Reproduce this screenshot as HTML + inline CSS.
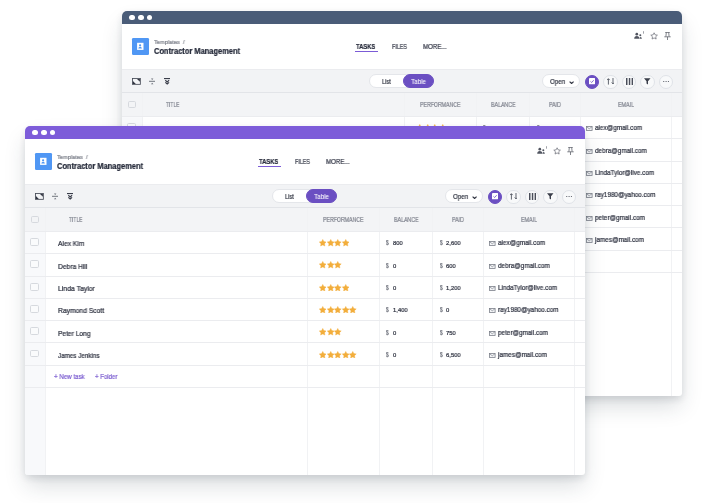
<!DOCTYPE html>
<html><head><meta charset="utf-8"><style>
*{margin:0;padding:0;box-sizing:border-box}
html,body{width:706px;height:503px;background:#fff;overflow:hidden;font-family:"Liberation Sans", sans-serif}
.win{position:absolute;background:#fff;border-radius:5px 5px 3px 3px;overflow:hidden;box-shadow:0 3px 7px rgba(30,45,60,0.12),0 12px 22px -2px rgba(30,45,60,0.17)}
.win div,.win svg{position:absolute}
.t{white-space:nowrap;transform-origin:0 0;will-change:transform;-webkit-text-stroke:0.22px currentColor}
.bar{left:0;top:0;width:560px;height:12.8px}
.dot{top:3.85px;width:5.3px;height:5.3px;border-radius:50%;background:#fff}
.appicon{left:9.5px;top:27.2px;width:17.3px;height:17px;border-radius:1.3px;background:#5097f4}
.appicon svg{left:0;top:0}
.uline{left:232.8px;top:39.9px;width:23px;height:1.1px;background:#7b5bd6}
.tbar{left:0;top:58px;width:560px;height:23.7px;background:#f2f3f5;border-top:0.6px solid #ebecef;border-bottom:0.8px solid #e2e4e8}
.pill{top:63.4px;height:14.1px;border-radius:7.05px;background:#fff;border:0.6px solid #e4e6ea}
.pill.purple{background:#6b4fc2;border-color:#6b4fc2}
.circ{top:63.5px;width:14.1px;height:14.1px;border-radius:50%;background:#f8f9fa;border:0.7px solid #e0e3e8}
.circ.purple{background:#6b4fc2;border-color:#6b4fc2}
.thead{left:0;top:81.7px;width:560px;background:#f3f4f6}
.lcol{left:0;width:20px;background:#f8f9fb}
.vline{width:1px;background:#f1f2f4}
.hline{left:0;width:560px;height:1px;background:#ebecef}
.cb{width:8.4px;height:7.9px;border:0.75px solid #d6d9de;border-radius:1.6px;background:#fafbfc}
.stars{width:40px;height:7px}
.star{position:absolute;top:-0.5px;width:7.5px;height:7.5px}
</style></head>
<body>
<div class="win" style="left:122px;top:11px;width:560px;height:384.8px">
<div class="bar" style="background:#4a5c78"></div>
<div class="dot" style="left:7.35px"></div>
<div class="dot" style="left:16.25px"></div>
<div class="dot" style="left:24.75px"></div>
<div class="appicon"><svg viewBox="0 0 17.3 17" width="17.3" height="17"><rect x="5.1" y="4.8" width="6.4" height="7.1" fill="#fff"/><circle cx="8.1" cy="7.3" r="1.1" fill="#5097f4"/><path d="M6.3 10.4 Q6.5 8.7 8.1 8.7 Q9.7 8.7 9.9 10.4 Z" fill="#5097f4"/></svg></div>
<div class="t " style="left:31.90px;top:28px;font-size:6.20px;line-height:6.20px;color:#80848e;transform:scaleX(0.916);">Templates&nbsp;&nbsp;/</div>
<div class="t " style="left:31.90px;top:36px;font-size:8.50px;line-height:8.50px;color:#232838;font-weight:bold;transform:scaleX(0.880);">Contractor&nbsp;Management</div>
<div class="t " style="left:234.20px;top:32px;font-size:7.00px;line-height:7.00px;color:#262a3a;font-weight:bold;transform:scaleX(0.832);">TASKS</div>
<div class="uline"></div>
<div class="t " style="left:269.70px;top:32px;font-size:7.00px;line-height:7.00px;color:#333746;transform:scaleX(0.766);">FILES</div>
<div class="t " style="left:300.80px;top:32px;font-size:7.00px;line-height:7.00px;color:#333746;transform:scaleX(0.876);">MORE...</div>
<svg class="ricon" style="left:511.8px;top:20.2px" width="10.5" height="8" viewBox="0 0 10.5 8"><circle cx="2.8" cy="3.2" r="1.35" fill="#50545f"/><path d="M0.2 7.7 Q0.3 5.0 2.8 5.0 Q5.3 5.0 5.4 7.7Z" fill="#50545f"/><circle cx="6.3" cy="4.3" r="1.0" fill="#50545f"/><path d="M5.5 7.7 Q5.6 5.9 6.5 5.9 Q7.8 5.9 7.9 7.7Z" fill="#50545f"/><path d="M9.6 0.2v2.5" stroke="#6a6e78" stroke-width="0.7"/></svg>
<svg class="ricon" style="left:528.4px;top:21.0px" width="8.2" height="7.9" viewBox="0 0 24 23"><path d="M12 2.2l2.9 6.1 6.8.9-5 4.7 1.3 6.7-6-3.3-6 3.3 1.3-6.7-5-4.7 6.8-.9z" fill="none" stroke="#585c66" stroke-width="1.9" stroke-linejoin="round"/></svg>
<svg class="ricon" style="left:542.4px;top:21.0px" width="7" height="8" viewBox="0 0 7 8"><path d="M1.2 0.45h4.6M2.3 0.45L1.9 4.6M4.7 0.45L5.1 4.6M0.3 4.8h6.4M3.5 4.8v3.2" stroke="#585c66" stroke-width="0.75" fill="none"/></svg>
<div class="tbar"></div>
<svg class="ticon" style="left:10px;top:67px" width="8.8" height="6.8" viewBox="0 0 8.8 6.8"><rect x="0.45" y="0.45" width="7.9" height="5.9" fill="none" stroke="#464a56" stroke-width="0.85"/><path d="M5.0 0.9H7.9V3.8Z" fill="#2e323e"/><path d="M0.9 3.0V5.9H3.8Z" fill="#2e323e"/></svg>
<svg class="ticon" style="left:26.6px;top:67px" width="6.4" height="6.6" viewBox="0 0 6.4 6.6"><path d="M0 3.3h6.4" stroke="#5a5e68" stroke-width="0.85"/><path d="M2.0 0.4H4.4L3.2 1.9Z" fill="#6a6e78"/><path d="M2.0 6.2H4.4L3.2 4.7Z" fill="#6a6e78"/></svg>
<svg class="ticon" style="left:41.5px;top:67px" width="6.4" height="7" viewBox="0 0 6.4 7"><rect x="0" y="0" width="6.4" height="1.1" fill="#3a3e4a"/><path d="M1.3 2.3L3.2 3.9 5.1 2.3M1.3 4.4L3.2 6.0 5.1 4.4" stroke="#3a3e4a" stroke-width="1.15" fill="none"/></svg>
<div class="pill" style="left:247px;width:65px"></div>
<div class="pill purple" style="left:280.9px;width:31.3px"></div>
<div class="t " style="left:259.70px;top:67px;font-size:7.00px;line-height:7.00px;color:#333744;transform:scaleX(0.799);">List</div>
<div class="t " style="left:289.10px;top:67px;font-size:7.00px;line-height:7.00px;color:#ffffff;transform:scaleX(0.896);-webkit-text-stroke:0.05px #fff;">Table</div>
<div class="pill" style="left:420.3px;width:37.3px"></div>
<div class="t " style="left:427.90px;top:67px;font-size:7.00px;line-height:7.00px;color:#333744;transform:scaleX(0.888);">Open</div>
<svg class="ticon" style="left:447px;top:69.8px" width="5.2" height="3" viewBox="0 0 5.2 3"><path d="M0.6 0.6l2 1.9 2-1.9" stroke="#333744" stroke-width="1.2" fill="none"/></svg>
<div class="circ purple" style="left:462.65px"></div>
<div class="circ" style="left:481.45px"></div>
<div class="circ" style="left:500.05px"></div>
<div class="circ" style="left:518.45px"></div>
<div class="circ" style="left:536.85px"></div>
<svg class="ticon" style="left:466.8px;top:67.4px" width="6.2" height="6.3" viewBox="0 0 6.2 6.3"><rect x="0" y="0" width="6.2" height="6.3" rx="0.9" fill="#fff"/><path d="M1.5 3.4L2.7 4.5 4.7 2.2" stroke="#6b4fc2" stroke-width="0.8" fill="none"/></svg>
<svg class="ticon" style="left:485px;top:67px" width="7.4" height="6.6" viewBox="0 0 7.4 6.6"><path d="M1.4 6.6V0.8M0.1 2.1L1.4 0.7 2.7 2.1M6 0v5.8M4.7 4.5L6 5.9 7.3 4.5" stroke="#474b57" stroke-width="0.85" fill="none"/></svg>
<svg class="ticon" style="left:503.8px;top:66.6px" width="7.1" height="7" viewBox="0 0 7.1 7"><path d="M0.75 0v7M3.55 0v7M6.35 0v7" stroke="#4a4e5a" stroke-width="1.45"/></svg>
<svg class="ticon" style="left:522.3px;top:67px" width="6.5" height="6.5" viewBox="0 0 6.5 6.5"><path d="M0 0.2H6.5L4 3.2V6.5L2.5 5.6V3.2Z" fill="#3a3e4a"/></svg>
<svg class="ticon" style="left:540.8px;top:70.1px" width="6.2" height="1.4" viewBox="0 0 6.2 1.4"><circle cx="0.7" cy="0.7" r="0.65" fill="#5a5e68"/><circle cx="3.1" cy="0.7" r="0.65" fill="#5a5e68"/><circle cx="5.5" cy="0.7" r="0.65" fill="#5a5e68"/></svg>
<div class="thead" style="height:23.75px"></div>
<div class="lcol" style="top:105.45px;height:279.35px"></div>
<div class="vline" style="left:20px;top:82px;height:302.8px"></div>
<div class="vline" style="left:282px;top:82px;height:302.8px"></div>
<div class="vline" style="left:354px;top:82px;height:302.8px"></div>
<div class="vline" style="left:407px;top:82px;height:302.8px"></div>
<div class="vline" style="left:458px;top:82px;height:302.8px"></div>
<div class="vline" style="left:549px;top:82px;height:302.8px"></div>
<div class="cb" style="left:5.6px;top:89.6px;background:transparent"></div>
<div class="t " style="left:44.30px;top:91px;font-size:6.30px;line-height:6.30px;color:#80848f;transform:scaleX(0.781);">TITLE</div>
<div class="t " style="left:298.45px;top:91px;font-size:6.30px;line-height:6.30px;color:#80848f;transform:scaleX(0.827);">PERFORMANCE</div>
<div class="t " style="left:368.90px;top:91px;font-size:6.30px;line-height:6.30px;color:#80848f;transform:scaleX(0.836);">BALANCE</div>
<div class="t " style="left:427.30px;top:91px;font-size:6.30px;line-height:6.30px;color:#80848f;transform:scaleX(0.829);">PAID</div>
<div class="t " style="left:496.20px;top:91px;font-size:6.30px;line-height:6.30px;color:#80848f;transform:scaleX(0.846);">EMAIL</div>
<div class="hline" style="top:105px"></div>
<div class="hline" style="top:127px"></div>
<div class="hline" style="top:150px"></div>
<div class="hline" style="top:172px"></div>
<div class="hline" style="top:194px"></div>
<div class="hline" style="top:216px"></div>
<div class="hline" style="top:239px"></div>
<div class="hline" style="top:261px"></div>
<div class="cb" style="left:5.4px;top:112.05px"></div>
<div class="t " style="left:33.10px;top:115px;font-size:6.90px;line-height:6.90px;color:#2e3240;transform:scaleX(0.970);">Alex&nbsp;Kim</div>
<div class="stars" style="left:293.9px;top:113.55px"><svg class="star" style="left:0.00px" viewBox="0 0 24 24"><path d="M12.00 1.20 L15.47 8.23 L23.22 9.35 L17.61 14.82 L18.94 22.55 L12.00 18.90 L5.06 22.55 L6.39 14.82 L0.78 9.35 L8.53 8.23Z" fill="#f3ae3c" stroke="#f3ae3c" stroke-width="1.2" stroke-linejoin="round"/></svg><svg class="star" style="left:7.65px" viewBox="0 0 24 24"><path d="M12.00 1.20 L15.47 8.23 L23.22 9.35 L17.61 14.82 L18.94 22.55 L12.00 18.90 L5.06 22.55 L6.39 14.82 L0.78 9.35 L8.53 8.23Z" fill="#f3ae3c" stroke="#f3ae3c" stroke-width="1.2" stroke-linejoin="round"/></svg><svg class="star" style="left:15.30px" viewBox="0 0 24 24"><path d="M12.00 1.20 L15.47 8.23 L23.22 9.35 L17.61 14.82 L18.94 22.55 L12.00 18.90 L5.06 22.55 L6.39 14.82 L0.78 9.35 L8.53 8.23Z" fill="#f3ae3c" stroke="#f3ae3c" stroke-width="1.2" stroke-linejoin="round"/></svg><svg class="star" style="left:22.95px" viewBox="0 0 24 24"><path d="M12.00 1.20 L15.47 8.23 L23.22 9.35 L17.61 14.82 L18.94 22.55 L12.00 18.90 L5.06 22.55 L6.39 14.82 L0.78 9.35 L8.53 8.23Z" fill="#f3ae3c" stroke="#f3ae3c" stroke-width="1.2" stroke-linejoin="round"/></svg></div>
<div class="t " style="left:360.90px;top:114px;font-size:6.60px;line-height:6.60px;color:#6a6e78;transform:scaleX(0.709);">$</div>
<div class="t " style="left:367.60px;top:115px;font-size:5.90px;line-height:5.90px;color:#2e3240;transform:scaleX(0.979);">800</div>
<div class="t " style="left:414.70px;top:114px;font-size:6.60px;line-height:6.60px;color:#6a6e78;transform:scaleX(0.709);">$</div>
<div class="t " style="left:420.70px;top:115px;font-size:5.90px;line-height:5.90px;color:#2e3240;transform:scaleX(0.979);">2,600</div>
<svg class="mail" style="left:464px;top:115px" width="6.5" height="4.8" viewBox="0 0 6.5 4.8"><rect x="0.4" y="0.4" width="5.7" height="4.0" fill="#f4f5f7" stroke="#7c808a" stroke-width="0.8"/><path d="M0.6 0.8l2.65 2 2.65-2" stroke="#7c808a" stroke-width="0.65" fill="none"/></svg>
<div class="t " style="left:473.20px;top:114px;font-size:6.90px;line-height:6.90px;color:#2e3240;transform:scaleX(0.924);">alex@gmail.com</div>
<div class="cb" style="left:5.4px;top:134.35px"></div>
<div class="t " style="left:33.10px;top:138px;font-size:6.90px;line-height:6.90px;color:#2e3240;transform:scaleX(0.971);">Debra&nbsp;Hill</div>
<div class="stars" style="left:293.9px;top:135.85px"><svg class="star" style="left:0.00px" viewBox="0 0 24 24"><path d="M12.00 1.20 L15.47 8.23 L23.22 9.35 L17.61 14.82 L18.94 22.55 L12.00 18.90 L5.06 22.55 L6.39 14.82 L0.78 9.35 L8.53 8.23Z" fill="#f3ae3c" stroke="#f3ae3c" stroke-width="1.2" stroke-linejoin="round"/></svg><svg class="star" style="left:7.65px" viewBox="0 0 24 24"><path d="M12.00 1.20 L15.47 8.23 L23.22 9.35 L17.61 14.82 L18.94 22.55 L12.00 18.90 L5.06 22.55 L6.39 14.82 L0.78 9.35 L8.53 8.23Z" fill="#f3ae3c" stroke="#f3ae3c" stroke-width="1.2" stroke-linejoin="round"/></svg><svg class="star" style="left:15.30px" viewBox="0 0 24 24"><path d="M12.00 1.20 L15.47 8.23 L23.22 9.35 L17.61 14.82 L18.94 22.55 L12.00 18.90 L5.06 22.55 L6.39 14.82 L0.78 9.35 L8.53 8.23Z" fill="#f3ae3c" stroke="#f3ae3c" stroke-width="1.2" stroke-linejoin="round"/></svg></div>
<div class="t " style="left:360.90px;top:137px;font-size:6.60px;line-height:6.60px;color:#6a6e78;transform:scaleX(0.709);">$</div>
<div class="t " style="left:367.60px;top:138px;font-size:5.90px;line-height:5.90px;color:#2e3240;transform:scaleX(0.979);">0</div>
<div class="t " style="left:414.70px;top:137px;font-size:6.60px;line-height:6.60px;color:#6a6e78;transform:scaleX(0.709);">$</div>
<div class="t " style="left:420.70px;top:138px;font-size:5.90px;line-height:5.90px;color:#2e3240;transform:scaleX(0.979);">600</div>
<svg class="mail" style="left:464px;top:138px" width="6.5" height="4.8" viewBox="0 0 6.5 4.8"><rect x="0.4" y="0.4" width="5.7" height="4.0" fill="#f4f5f7" stroke="#7c808a" stroke-width="0.8"/><path d="M0.6 0.8l2.65 2 2.65-2" stroke="#7c808a" stroke-width="0.65" fill="none"/></svg>
<div class="t " style="left:473.20px;top:137px;font-size:6.90px;line-height:6.90px;color:#2e3240;transform:scaleX(0.924);">debra@gmail.com</div>
<div class="cb" style="left:5.4px;top:156.65px"></div>
<div class="t " style="left:33.10px;top:160px;font-size:6.90px;line-height:6.90px;color:#2e3240;transform:scaleX(0.990);">Linda&nbsp;Taylor</div>
<div class="stars" style="left:293.9px;top:158.15px"><svg class="star" style="left:0.00px" viewBox="0 0 24 24"><path d="M12.00 1.20 L15.47 8.23 L23.22 9.35 L17.61 14.82 L18.94 22.55 L12.00 18.90 L5.06 22.55 L6.39 14.82 L0.78 9.35 L8.53 8.23Z" fill="#f3ae3c" stroke="#f3ae3c" stroke-width="1.2" stroke-linejoin="round"/></svg><svg class="star" style="left:7.65px" viewBox="0 0 24 24"><path d="M12.00 1.20 L15.47 8.23 L23.22 9.35 L17.61 14.82 L18.94 22.55 L12.00 18.90 L5.06 22.55 L6.39 14.82 L0.78 9.35 L8.53 8.23Z" fill="#f3ae3c" stroke="#f3ae3c" stroke-width="1.2" stroke-linejoin="round"/></svg><svg class="star" style="left:15.30px" viewBox="0 0 24 24"><path d="M12.00 1.20 L15.47 8.23 L23.22 9.35 L17.61 14.82 L18.94 22.55 L12.00 18.90 L5.06 22.55 L6.39 14.82 L0.78 9.35 L8.53 8.23Z" fill="#f3ae3c" stroke="#f3ae3c" stroke-width="1.2" stroke-linejoin="round"/></svg><svg class="star" style="left:22.95px" viewBox="0 0 24 24"><path d="M12.00 1.20 L15.47 8.23 L23.22 9.35 L17.61 14.82 L18.94 22.55 L12.00 18.90 L5.06 22.55 L6.39 14.82 L0.78 9.35 L8.53 8.23Z" fill="#f3ae3c" stroke="#f3ae3c" stroke-width="1.2" stroke-linejoin="round"/></svg></div>
<div class="t " style="left:360.90px;top:159px;font-size:6.60px;line-height:6.60px;color:#6a6e78;transform:scaleX(0.709);">$</div>
<div class="t " style="left:367.60px;top:160px;font-size:5.90px;line-height:5.90px;color:#2e3240;transform:scaleX(0.979);">0</div>
<div class="t " style="left:414.70px;top:159px;font-size:6.60px;line-height:6.60px;color:#6a6e78;transform:scaleX(0.709);">$</div>
<div class="t " style="left:420.70px;top:160px;font-size:5.90px;line-height:5.90px;color:#2e3240;transform:scaleX(0.979);">1,200</div>
<svg class="mail" style="left:464px;top:160px" width="6.5" height="4.8" viewBox="0 0 6.5 4.8"><rect x="0.4" y="0.4" width="5.7" height="4.0" fill="#f4f5f7" stroke="#7c808a" stroke-width="0.8"/><path d="M0.6 0.8l2.65 2 2.65-2" stroke="#7c808a" stroke-width="0.65" fill="none"/></svg>
<div class="t " style="left:473.20px;top:159px;font-size:6.90px;line-height:6.90px;color:#2e3240;transform:scaleX(0.924);">LindaTylor@live.com</div>
<div class="cb" style="left:5.4px;top:178.95px"></div>
<div class="t " style="left:33.10px;top:182px;font-size:6.90px;line-height:6.90px;color:#2e3240;transform:scaleX(0.979);">Raymond&nbsp;Scott</div>
<div class="stars" style="left:293.9px;top:180.45px"><svg class="star" style="left:0.00px" viewBox="0 0 24 24"><path d="M12.00 1.20 L15.47 8.23 L23.22 9.35 L17.61 14.82 L18.94 22.55 L12.00 18.90 L5.06 22.55 L6.39 14.82 L0.78 9.35 L8.53 8.23Z" fill="#f3ae3c" stroke="#f3ae3c" stroke-width="1.2" stroke-linejoin="round"/></svg><svg class="star" style="left:7.65px" viewBox="0 0 24 24"><path d="M12.00 1.20 L15.47 8.23 L23.22 9.35 L17.61 14.82 L18.94 22.55 L12.00 18.90 L5.06 22.55 L6.39 14.82 L0.78 9.35 L8.53 8.23Z" fill="#f3ae3c" stroke="#f3ae3c" stroke-width="1.2" stroke-linejoin="round"/></svg><svg class="star" style="left:15.30px" viewBox="0 0 24 24"><path d="M12.00 1.20 L15.47 8.23 L23.22 9.35 L17.61 14.82 L18.94 22.55 L12.00 18.90 L5.06 22.55 L6.39 14.82 L0.78 9.35 L8.53 8.23Z" fill="#f3ae3c" stroke="#f3ae3c" stroke-width="1.2" stroke-linejoin="round"/></svg><svg class="star" style="left:22.95px" viewBox="0 0 24 24"><path d="M12.00 1.20 L15.47 8.23 L23.22 9.35 L17.61 14.82 L18.94 22.55 L12.00 18.90 L5.06 22.55 L6.39 14.82 L0.78 9.35 L8.53 8.23Z" fill="#f3ae3c" stroke="#f3ae3c" stroke-width="1.2" stroke-linejoin="round"/></svg><svg class="star" style="left:30.60px" viewBox="0 0 24 24"><path d="M12.00 1.20 L15.47 8.23 L23.22 9.35 L17.61 14.82 L18.94 22.55 L12.00 18.90 L5.06 22.55 L6.39 14.82 L0.78 9.35 L8.53 8.23Z" fill="#f3ae3c" stroke="#f3ae3c" stroke-width="1.2" stroke-linejoin="round"/></svg></div>
<div class="t " style="left:360.90px;top:181px;font-size:6.60px;line-height:6.60px;color:#6a6e78;transform:scaleX(0.709);">$</div>
<div class="t " style="left:367.60px;top:182px;font-size:5.90px;line-height:5.90px;color:#2e3240;transform:scaleX(0.979);">1,400</div>
<div class="t " style="left:414.70px;top:181px;font-size:6.60px;line-height:6.60px;color:#6a6e78;transform:scaleX(0.709);">$</div>
<div class="t " style="left:420.70px;top:182px;font-size:5.90px;line-height:5.90px;color:#2e3240;transform:scaleX(0.979);">0</div>
<svg class="mail" style="left:464px;top:182px" width="6.5" height="4.8" viewBox="0 0 6.5 4.8"><rect x="0.4" y="0.4" width="5.7" height="4.0" fill="#f4f5f7" stroke="#7c808a" stroke-width="0.8"/><path d="M0.6 0.8l2.65 2 2.65-2" stroke="#7c808a" stroke-width="0.65" fill="none"/></svg>
<div class="t " style="left:473.20px;top:181px;font-size:6.90px;line-height:6.90px;color:#2e3240;transform:scaleX(0.924);">ray1980@yahoo.com</div>
<div class="cb" style="left:5.4px;top:201.25px"></div>
<div class="t " style="left:33.10px;top:205px;font-size:6.90px;line-height:6.90px;color:#2e3240;transform:scaleX(0.960);">Peter&nbsp;Long</div>
<div class="stars" style="left:293.9px;top:202.75px"><svg class="star" style="left:0.00px" viewBox="0 0 24 24"><path d="M12.00 1.20 L15.47 8.23 L23.22 9.35 L17.61 14.82 L18.94 22.55 L12.00 18.90 L5.06 22.55 L6.39 14.82 L0.78 9.35 L8.53 8.23Z" fill="#f3ae3c" stroke="#f3ae3c" stroke-width="1.2" stroke-linejoin="round"/></svg><svg class="star" style="left:7.65px" viewBox="0 0 24 24"><path d="M12.00 1.20 L15.47 8.23 L23.22 9.35 L17.61 14.82 L18.94 22.55 L12.00 18.90 L5.06 22.55 L6.39 14.82 L0.78 9.35 L8.53 8.23Z" fill="#f3ae3c" stroke="#f3ae3c" stroke-width="1.2" stroke-linejoin="round"/></svg><svg class="star" style="left:15.30px" viewBox="0 0 24 24"><path d="M12.00 1.20 L15.47 8.23 L23.22 9.35 L17.61 14.82 L18.94 22.55 L12.00 18.90 L5.06 22.55 L6.39 14.82 L0.78 9.35 L8.53 8.23Z" fill="#f3ae3c" stroke="#f3ae3c" stroke-width="1.2" stroke-linejoin="round"/></svg></div>
<div class="t " style="left:360.90px;top:204px;font-size:6.60px;line-height:6.60px;color:#6a6e78;transform:scaleX(0.709);">$</div>
<div class="t " style="left:367.60px;top:205px;font-size:5.90px;line-height:5.90px;color:#2e3240;transform:scaleX(0.979);">0</div>
<div class="t " style="left:414.70px;top:204px;font-size:6.60px;line-height:6.60px;color:#6a6e78;transform:scaleX(0.709);">$</div>
<div class="t " style="left:420.70px;top:205px;font-size:5.90px;line-height:5.90px;color:#2e3240;transform:scaleX(0.979);">750</div>
<svg class="mail" style="left:464px;top:205px" width="6.5" height="4.8" viewBox="0 0 6.5 4.8"><rect x="0.4" y="0.4" width="5.7" height="4.0" fill="#f4f5f7" stroke="#7c808a" stroke-width="0.8"/><path d="M0.6 0.8l2.65 2 2.65-2" stroke="#7c808a" stroke-width="0.65" fill="none"/></svg>
<div class="t " style="left:473.20px;top:204px;font-size:6.90px;line-height:6.90px;color:#2e3240;transform:scaleX(0.924);">peter@gmail.com</div>
<div class="cb" style="left:5.4px;top:223.55px"></div>
<div class="t " style="left:33.10px;top:227px;font-size:6.90px;line-height:6.90px;color:#2e3240;transform:scaleX(0.909);">James&nbsp;Jenkins</div>
<div class="stars" style="left:293.9px;top:225.05px"><svg class="star" style="left:0.00px" viewBox="0 0 24 24"><path d="M12.00 1.20 L15.47 8.23 L23.22 9.35 L17.61 14.82 L18.94 22.55 L12.00 18.90 L5.06 22.55 L6.39 14.82 L0.78 9.35 L8.53 8.23Z" fill="#f3ae3c" stroke="#f3ae3c" stroke-width="1.2" stroke-linejoin="round"/></svg><svg class="star" style="left:7.65px" viewBox="0 0 24 24"><path d="M12.00 1.20 L15.47 8.23 L23.22 9.35 L17.61 14.82 L18.94 22.55 L12.00 18.90 L5.06 22.55 L6.39 14.82 L0.78 9.35 L8.53 8.23Z" fill="#f3ae3c" stroke="#f3ae3c" stroke-width="1.2" stroke-linejoin="round"/></svg><svg class="star" style="left:15.30px" viewBox="0 0 24 24"><path d="M12.00 1.20 L15.47 8.23 L23.22 9.35 L17.61 14.82 L18.94 22.55 L12.00 18.90 L5.06 22.55 L6.39 14.82 L0.78 9.35 L8.53 8.23Z" fill="#f3ae3c" stroke="#f3ae3c" stroke-width="1.2" stroke-linejoin="round"/></svg><svg class="star" style="left:22.95px" viewBox="0 0 24 24"><path d="M12.00 1.20 L15.47 8.23 L23.22 9.35 L17.61 14.82 L18.94 22.55 L12.00 18.90 L5.06 22.55 L6.39 14.82 L0.78 9.35 L8.53 8.23Z" fill="#f3ae3c" stroke="#f3ae3c" stroke-width="1.2" stroke-linejoin="round"/></svg><svg class="star" style="left:30.60px" viewBox="0 0 24 24"><path d="M12.00 1.20 L15.47 8.23 L23.22 9.35 L17.61 14.82 L18.94 22.55 L12.00 18.90 L5.06 22.55 L6.39 14.82 L0.78 9.35 L8.53 8.23Z" fill="#f3ae3c" stroke="#f3ae3c" stroke-width="1.2" stroke-linejoin="round"/></svg></div>
<div class="t " style="left:360.90px;top:226px;font-size:6.60px;line-height:6.60px;color:#6a6e78;transform:scaleX(0.709);">$</div>
<div class="t " style="left:367.60px;top:227px;font-size:5.90px;line-height:5.90px;color:#2e3240;transform:scaleX(0.979);">0</div>
<div class="t " style="left:414.70px;top:226px;font-size:6.60px;line-height:6.60px;color:#6a6e78;transform:scaleX(0.709);">$</div>
<div class="t " style="left:420.70px;top:227px;font-size:5.90px;line-height:5.90px;color:#2e3240;transform:scaleX(0.979);">6,500</div>
<svg class="mail" style="left:464px;top:227px" width="6.5" height="4.8" viewBox="0 0 6.5 4.8"><rect x="0.4" y="0.4" width="5.7" height="4.0" fill="#f4f5f7" stroke="#7c808a" stroke-width="0.8"/><path d="M0.6 0.8l2.65 2 2.65-2" stroke="#7c808a" stroke-width="0.65" fill="none"/></svg>
<div class="t " style="left:473.36px;top:226px;font-size:6.90px;line-height:6.90px;color:#2e3240;transform:scaleX(0.924);">james@mail.com</div>
<div class="t " style="left:28.60px;top:248px;font-size:6.90px;line-height:6.90px;color:#7a5cd0;transform:scaleX(0.894);">+&nbsp;New&nbsp;task</div>
<div class="t " style="left:70.30px;top:248px;font-size:6.90px;line-height:6.90px;color:#7a5cd0;transform:scaleX(0.878);">+&nbsp;Folder</div>
</div>
<div class="win" style="left:25px;top:126px;width:560px;height:349px">
<div class="bar" style="background:#7d5cd9"></div>
<div class="dot" style="left:7.35px"></div>
<div class="dot" style="left:16.25px"></div>
<div class="dot" style="left:24.75px"></div>
<div class="appicon"><svg viewBox="0 0 17.3 17" width="17.3" height="17"><rect x="5.1" y="4.8" width="6.4" height="7.1" fill="#fff"/><circle cx="8.1" cy="7.3" r="1.1" fill="#5097f4"/><path d="M6.3 10.4 Q6.5 8.7 8.1 8.7 Q9.7 8.7 9.9 10.4 Z" fill="#5097f4"/></svg></div>
<div class="t " style="left:31.90px;top:28px;font-size:6.20px;line-height:6.20px;color:#80848e;transform:scaleX(0.916);">Templates&nbsp;&nbsp;/</div>
<div class="t " style="left:31.90px;top:36px;font-size:8.50px;line-height:8.50px;color:#232838;font-weight:bold;transform:scaleX(0.880);">Contractor&nbsp;Management</div>
<div class="t " style="left:234.20px;top:32px;font-size:7.00px;line-height:7.00px;color:#262a3a;font-weight:bold;transform:scaleX(0.832);">TASKS</div>
<div class="uline"></div>
<div class="t " style="left:269.70px;top:32px;font-size:7.00px;line-height:7.00px;color:#333746;transform:scaleX(0.766);">FILES</div>
<div class="t " style="left:300.80px;top:32px;font-size:7.00px;line-height:7.00px;color:#333746;transform:scaleX(0.876);">MORE...</div>
<svg class="ricon" style="left:511.8px;top:20.2px" width="10.5" height="8" viewBox="0 0 10.5 8"><circle cx="2.8" cy="3.2" r="1.35" fill="#50545f"/><path d="M0.2 7.7 Q0.3 5.0 2.8 5.0 Q5.3 5.0 5.4 7.7Z" fill="#50545f"/><circle cx="6.3" cy="4.3" r="1.0" fill="#50545f"/><path d="M5.5 7.7 Q5.6 5.9 6.5 5.9 Q7.8 5.9 7.9 7.7Z" fill="#50545f"/><path d="M9.6 0.2v2.5" stroke="#6a6e78" stroke-width="0.7"/></svg>
<svg class="ricon" style="left:528.4px;top:21.0px" width="8.2" height="7.9" viewBox="0 0 24 23"><path d="M12 2.2l2.9 6.1 6.8.9-5 4.7 1.3 6.7-6-3.3-6 3.3 1.3-6.7-5-4.7 6.8-.9z" fill="none" stroke="#585c66" stroke-width="1.9" stroke-linejoin="round"/></svg>
<svg class="ricon" style="left:542.4px;top:21.0px" width="7" height="8" viewBox="0 0 7 8"><path d="M1.2 0.45h4.6M2.3 0.45L1.9 4.6M4.7 0.45L5.1 4.6M0.3 4.8h6.4M3.5 4.8v3.2" stroke="#585c66" stroke-width="0.75" fill="none"/></svg>
<div class="tbar"></div>
<svg class="ticon" style="left:10px;top:67px" width="8.8" height="6.8" viewBox="0 0 8.8 6.8"><rect x="0.45" y="0.45" width="7.9" height="5.9" fill="none" stroke="#464a56" stroke-width="0.85"/><path d="M5.0 0.9H7.9V3.8Z" fill="#2e323e"/><path d="M0.9 3.0V5.9H3.8Z" fill="#2e323e"/></svg>
<svg class="ticon" style="left:26.6px;top:67px" width="6.4" height="6.6" viewBox="0 0 6.4 6.6"><path d="M0 3.3h6.4" stroke="#5a5e68" stroke-width="0.85"/><path d="M2.0 0.4H4.4L3.2 1.9Z" fill="#6a6e78"/><path d="M2.0 6.2H4.4L3.2 4.7Z" fill="#6a6e78"/></svg>
<svg class="ticon" style="left:41.5px;top:67px" width="6.4" height="7" viewBox="0 0 6.4 7"><rect x="0" y="0" width="6.4" height="1.1" fill="#3a3e4a"/><path d="M1.3 2.3L3.2 3.9 5.1 2.3M1.3 4.4L3.2 6.0 5.1 4.4" stroke="#3a3e4a" stroke-width="1.15" fill="none"/></svg>
<div class="pill" style="left:247px;width:65px"></div>
<div class="pill purple" style="left:280.9px;width:31.3px"></div>
<div class="t " style="left:259.70px;top:67px;font-size:7.00px;line-height:7.00px;color:#333744;transform:scaleX(0.799);">List</div>
<div class="t " style="left:289.10px;top:67px;font-size:7.00px;line-height:7.00px;color:#ffffff;transform:scaleX(0.896);-webkit-text-stroke:0.05px #fff;">Table</div>
<div class="pill" style="left:420.3px;width:37.3px"></div>
<div class="t " style="left:427.90px;top:67px;font-size:7.00px;line-height:7.00px;color:#333744;transform:scaleX(0.888);">Open</div>
<svg class="ticon" style="left:447px;top:69.8px" width="5.2" height="3" viewBox="0 0 5.2 3"><path d="M0.6 0.6l2 1.9 2-1.9" stroke="#333744" stroke-width="1.2" fill="none"/></svg>
<div class="circ purple" style="left:462.65px"></div>
<div class="circ" style="left:481.45px"></div>
<div class="circ" style="left:500.05px"></div>
<div class="circ" style="left:518.45px"></div>
<div class="circ" style="left:536.85px"></div>
<svg class="ticon" style="left:466.8px;top:67.4px" width="6.2" height="6.3" viewBox="0 0 6.2 6.3"><rect x="0" y="0" width="6.2" height="6.3" rx="0.9" fill="#fff"/><path d="M1.5 3.4L2.7 4.5 4.7 2.2" stroke="#6b4fc2" stroke-width="0.8" fill="none"/></svg>
<svg class="ticon" style="left:485px;top:67px" width="7.4" height="6.6" viewBox="0 0 7.4 6.6"><path d="M1.4 6.6V0.8M0.1 2.1L1.4 0.7 2.7 2.1M6 0v5.8M4.7 4.5L6 5.9 7.3 4.5" stroke="#474b57" stroke-width="0.85" fill="none"/></svg>
<svg class="ticon" style="left:503.8px;top:66.6px" width="7.1" height="7" viewBox="0 0 7.1 7"><path d="M0.75 0v7M3.55 0v7M6.35 0v7" stroke="#4a4e5a" stroke-width="1.45"/></svg>
<svg class="ticon" style="left:522.3px;top:67px" width="6.5" height="6.5" viewBox="0 0 6.5 6.5"><path d="M0 0.2H6.5L4 3.2V6.5L2.5 5.6V3.2Z" fill="#3a3e4a"/></svg>
<svg class="ticon" style="left:540.8px;top:70.1px" width="6.2" height="1.4" viewBox="0 0 6.2 1.4"><circle cx="0.7" cy="0.7" r="0.65" fill="#5a5e68"/><circle cx="3.1" cy="0.7" r="0.65" fill="#5a5e68"/><circle cx="5.5" cy="0.7" r="0.65" fill="#5a5e68"/></svg>
<div class="thead" style="height:23.75px"></div>
<div class="lcol" style="top:105.45px;height:243.55px"></div>
<div class="vline" style="left:20px;top:82px;height:267px"></div>
<div class="vline" style="left:282px;top:82px;height:267px"></div>
<div class="vline" style="left:354px;top:82px;height:267px"></div>
<div class="vline" style="left:407px;top:82px;height:267px"></div>
<div class="vline" style="left:458px;top:82px;height:267px"></div>
<div class="vline" style="left:549px;top:82px;height:267px"></div>
<div class="cb" style="left:5.6px;top:89.6px;background:transparent"></div>
<div class="t " style="left:44.30px;top:91px;font-size:6.30px;line-height:6.30px;color:#80848f;transform:scaleX(0.781);">TITLE</div>
<div class="t " style="left:298.45px;top:91px;font-size:6.30px;line-height:6.30px;color:#80848f;transform:scaleX(0.827);">PERFORMANCE</div>
<div class="t " style="left:368.90px;top:91px;font-size:6.30px;line-height:6.30px;color:#80848f;transform:scaleX(0.836);">BALANCE</div>
<div class="t " style="left:427.30px;top:91px;font-size:6.30px;line-height:6.30px;color:#80848f;transform:scaleX(0.829);">PAID</div>
<div class="t " style="left:496.20px;top:91px;font-size:6.30px;line-height:6.30px;color:#80848f;transform:scaleX(0.846);">EMAIL</div>
<div class="hline" style="top:105px"></div>
<div class="hline" style="top:127px"></div>
<div class="hline" style="top:150px"></div>
<div class="hline" style="top:172px"></div>
<div class="hline" style="top:194px"></div>
<div class="hline" style="top:216px"></div>
<div class="hline" style="top:239px"></div>
<div class="hline" style="top:261px"></div>
<div class="cb" style="left:5.4px;top:112.05px"></div>
<div class="t " style="left:33.10px;top:115px;font-size:6.90px;line-height:6.90px;color:#2e3240;transform:scaleX(0.970);">Alex&nbsp;Kim</div>
<div class="stars" style="left:293.9px;top:113.55px"><svg class="star" style="left:0.00px" viewBox="0 0 24 24"><path d="M12.00 1.20 L15.47 8.23 L23.22 9.35 L17.61 14.82 L18.94 22.55 L12.00 18.90 L5.06 22.55 L6.39 14.82 L0.78 9.35 L8.53 8.23Z" fill="#f3ae3c" stroke="#f3ae3c" stroke-width="1.2" stroke-linejoin="round"/></svg><svg class="star" style="left:7.65px" viewBox="0 0 24 24"><path d="M12.00 1.20 L15.47 8.23 L23.22 9.35 L17.61 14.82 L18.94 22.55 L12.00 18.90 L5.06 22.55 L6.39 14.82 L0.78 9.35 L8.53 8.23Z" fill="#f3ae3c" stroke="#f3ae3c" stroke-width="1.2" stroke-linejoin="round"/></svg><svg class="star" style="left:15.30px" viewBox="0 0 24 24"><path d="M12.00 1.20 L15.47 8.23 L23.22 9.35 L17.61 14.82 L18.94 22.55 L12.00 18.90 L5.06 22.55 L6.39 14.82 L0.78 9.35 L8.53 8.23Z" fill="#f3ae3c" stroke="#f3ae3c" stroke-width="1.2" stroke-linejoin="round"/></svg><svg class="star" style="left:22.95px" viewBox="0 0 24 24"><path d="M12.00 1.20 L15.47 8.23 L23.22 9.35 L17.61 14.82 L18.94 22.55 L12.00 18.90 L5.06 22.55 L6.39 14.82 L0.78 9.35 L8.53 8.23Z" fill="#f3ae3c" stroke="#f3ae3c" stroke-width="1.2" stroke-linejoin="round"/></svg></div>
<div class="t " style="left:360.90px;top:114px;font-size:6.60px;line-height:6.60px;color:#6a6e78;transform:scaleX(0.709);">$</div>
<div class="t " style="left:367.60px;top:115px;font-size:5.90px;line-height:5.90px;color:#2e3240;transform:scaleX(0.979);">800</div>
<div class="t " style="left:414.70px;top:114px;font-size:6.60px;line-height:6.60px;color:#6a6e78;transform:scaleX(0.709);">$</div>
<div class="t " style="left:420.70px;top:115px;font-size:5.90px;line-height:5.90px;color:#2e3240;transform:scaleX(0.979);">2,600</div>
<svg class="mail" style="left:464px;top:115px" width="6.5" height="4.8" viewBox="0 0 6.5 4.8"><rect x="0.4" y="0.4" width="5.7" height="4.0" fill="#f4f5f7" stroke="#7c808a" stroke-width="0.8"/><path d="M0.6 0.8l2.65 2 2.65-2" stroke="#7c808a" stroke-width="0.65" fill="none"/></svg>
<div class="t " style="left:473.20px;top:114px;font-size:6.90px;line-height:6.90px;color:#2e3240;transform:scaleX(0.924);">alex@gmail.com</div>
<div class="cb" style="left:5.4px;top:134.35px"></div>
<div class="t " style="left:33.10px;top:138px;font-size:6.90px;line-height:6.90px;color:#2e3240;transform:scaleX(0.971);">Debra&nbsp;Hill</div>
<div class="stars" style="left:293.9px;top:135.85px"><svg class="star" style="left:0.00px" viewBox="0 0 24 24"><path d="M12.00 1.20 L15.47 8.23 L23.22 9.35 L17.61 14.82 L18.94 22.55 L12.00 18.90 L5.06 22.55 L6.39 14.82 L0.78 9.35 L8.53 8.23Z" fill="#f3ae3c" stroke="#f3ae3c" stroke-width="1.2" stroke-linejoin="round"/></svg><svg class="star" style="left:7.65px" viewBox="0 0 24 24"><path d="M12.00 1.20 L15.47 8.23 L23.22 9.35 L17.61 14.82 L18.94 22.55 L12.00 18.90 L5.06 22.55 L6.39 14.82 L0.78 9.35 L8.53 8.23Z" fill="#f3ae3c" stroke="#f3ae3c" stroke-width="1.2" stroke-linejoin="round"/></svg><svg class="star" style="left:15.30px" viewBox="0 0 24 24"><path d="M12.00 1.20 L15.47 8.23 L23.22 9.35 L17.61 14.82 L18.94 22.55 L12.00 18.90 L5.06 22.55 L6.39 14.82 L0.78 9.35 L8.53 8.23Z" fill="#f3ae3c" stroke="#f3ae3c" stroke-width="1.2" stroke-linejoin="round"/></svg></div>
<div class="t " style="left:360.90px;top:137px;font-size:6.60px;line-height:6.60px;color:#6a6e78;transform:scaleX(0.709);">$</div>
<div class="t " style="left:367.60px;top:138px;font-size:5.90px;line-height:5.90px;color:#2e3240;transform:scaleX(0.979);">0</div>
<div class="t " style="left:414.70px;top:137px;font-size:6.60px;line-height:6.60px;color:#6a6e78;transform:scaleX(0.709);">$</div>
<div class="t " style="left:420.70px;top:138px;font-size:5.90px;line-height:5.90px;color:#2e3240;transform:scaleX(0.979);">600</div>
<svg class="mail" style="left:464px;top:138px" width="6.5" height="4.8" viewBox="0 0 6.5 4.8"><rect x="0.4" y="0.4" width="5.7" height="4.0" fill="#f4f5f7" stroke="#7c808a" stroke-width="0.8"/><path d="M0.6 0.8l2.65 2 2.65-2" stroke="#7c808a" stroke-width="0.65" fill="none"/></svg>
<div class="t " style="left:473.20px;top:137px;font-size:6.90px;line-height:6.90px;color:#2e3240;transform:scaleX(0.924);">debra@gmail.com</div>
<div class="cb" style="left:5.4px;top:156.65px"></div>
<div class="t " style="left:33.10px;top:160px;font-size:6.90px;line-height:6.90px;color:#2e3240;transform:scaleX(0.990);">Linda&nbsp;Taylor</div>
<div class="stars" style="left:293.9px;top:158.15px"><svg class="star" style="left:0.00px" viewBox="0 0 24 24"><path d="M12.00 1.20 L15.47 8.23 L23.22 9.35 L17.61 14.82 L18.94 22.55 L12.00 18.90 L5.06 22.55 L6.39 14.82 L0.78 9.35 L8.53 8.23Z" fill="#f3ae3c" stroke="#f3ae3c" stroke-width="1.2" stroke-linejoin="round"/></svg><svg class="star" style="left:7.65px" viewBox="0 0 24 24"><path d="M12.00 1.20 L15.47 8.23 L23.22 9.35 L17.61 14.82 L18.94 22.55 L12.00 18.90 L5.06 22.55 L6.39 14.82 L0.78 9.35 L8.53 8.23Z" fill="#f3ae3c" stroke="#f3ae3c" stroke-width="1.2" stroke-linejoin="round"/></svg><svg class="star" style="left:15.30px" viewBox="0 0 24 24"><path d="M12.00 1.20 L15.47 8.23 L23.22 9.35 L17.61 14.82 L18.94 22.55 L12.00 18.90 L5.06 22.55 L6.39 14.82 L0.78 9.35 L8.53 8.23Z" fill="#f3ae3c" stroke="#f3ae3c" stroke-width="1.2" stroke-linejoin="round"/></svg><svg class="star" style="left:22.95px" viewBox="0 0 24 24"><path d="M12.00 1.20 L15.47 8.23 L23.22 9.35 L17.61 14.82 L18.94 22.55 L12.00 18.90 L5.06 22.55 L6.39 14.82 L0.78 9.35 L8.53 8.23Z" fill="#f3ae3c" stroke="#f3ae3c" stroke-width="1.2" stroke-linejoin="round"/></svg></div>
<div class="t " style="left:360.90px;top:159px;font-size:6.60px;line-height:6.60px;color:#6a6e78;transform:scaleX(0.709);">$</div>
<div class="t " style="left:367.60px;top:160px;font-size:5.90px;line-height:5.90px;color:#2e3240;transform:scaleX(0.979);">0</div>
<div class="t " style="left:414.70px;top:159px;font-size:6.60px;line-height:6.60px;color:#6a6e78;transform:scaleX(0.709);">$</div>
<div class="t " style="left:420.70px;top:160px;font-size:5.90px;line-height:5.90px;color:#2e3240;transform:scaleX(0.979);">1,200</div>
<svg class="mail" style="left:464px;top:160px" width="6.5" height="4.8" viewBox="0 0 6.5 4.8"><rect x="0.4" y="0.4" width="5.7" height="4.0" fill="#f4f5f7" stroke="#7c808a" stroke-width="0.8"/><path d="M0.6 0.8l2.65 2 2.65-2" stroke="#7c808a" stroke-width="0.65" fill="none"/></svg>
<div class="t " style="left:473.20px;top:159px;font-size:6.90px;line-height:6.90px;color:#2e3240;transform:scaleX(0.924);">LindaTylor@live.com</div>
<div class="cb" style="left:5.4px;top:178.95px"></div>
<div class="t " style="left:33.10px;top:182px;font-size:6.90px;line-height:6.90px;color:#2e3240;transform:scaleX(0.979);">Raymond&nbsp;Scott</div>
<div class="stars" style="left:293.9px;top:180.45px"><svg class="star" style="left:0.00px" viewBox="0 0 24 24"><path d="M12.00 1.20 L15.47 8.23 L23.22 9.35 L17.61 14.82 L18.94 22.55 L12.00 18.90 L5.06 22.55 L6.39 14.82 L0.78 9.35 L8.53 8.23Z" fill="#f3ae3c" stroke="#f3ae3c" stroke-width="1.2" stroke-linejoin="round"/></svg><svg class="star" style="left:7.65px" viewBox="0 0 24 24"><path d="M12.00 1.20 L15.47 8.23 L23.22 9.35 L17.61 14.82 L18.94 22.55 L12.00 18.90 L5.06 22.55 L6.39 14.82 L0.78 9.35 L8.53 8.23Z" fill="#f3ae3c" stroke="#f3ae3c" stroke-width="1.2" stroke-linejoin="round"/></svg><svg class="star" style="left:15.30px" viewBox="0 0 24 24"><path d="M12.00 1.20 L15.47 8.23 L23.22 9.35 L17.61 14.82 L18.94 22.55 L12.00 18.90 L5.06 22.55 L6.39 14.82 L0.78 9.35 L8.53 8.23Z" fill="#f3ae3c" stroke="#f3ae3c" stroke-width="1.2" stroke-linejoin="round"/></svg><svg class="star" style="left:22.95px" viewBox="0 0 24 24"><path d="M12.00 1.20 L15.47 8.23 L23.22 9.35 L17.61 14.82 L18.94 22.55 L12.00 18.90 L5.06 22.55 L6.39 14.82 L0.78 9.35 L8.53 8.23Z" fill="#f3ae3c" stroke="#f3ae3c" stroke-width="1.2" stroke-linejoin="round"/></svg><svg class="star" style="left:30.60px" viewBox="0 0 24 24"><path d="M12.00 1.20 L15.47 8.23 L23.22 9.35 L17.61 14.82 L18.94 22.55 L12.00 18.90 L5.06 22.55 L6.39 14.82 L0.78 9.35 L8.53 8.23Z" fill="#f3ae3c" stroke="#f3ae3c" stroke-width="1.2" stroke-linejoin="round"/></svg></div>
<div class="t " style="left:360.90px;top:181px;font-size:6.60px;line-height:6.60px;color:#6a6e78;transform:scaleX(0.709);">$</div>
<div class="t " style="left:367.60px;top:182px;font-size:5.90px;line-height:5.90px;color:#2e3240;transform:scaleX(0.979);">1,400</div>
<div class="t " style="left:414.70px;top:181px;font-size:6.60px;line-height:6.60px;color:#6a6e78;transform:scaleX(0.709);">$</div>
<div class="t " style="left:420.70px;top:182px;font-size:5.90px;line-height:5.90px;color:#2e3240;transform:scaleX(0.979);">0</div>
<svg class="mail" style="left:464px;top:182px" width="6.5" height="4.8" viewBox="0 0 6.5 4.8"><rect x="0.4" y="0.4" width="5.7" height="4.0" fill="#f4f5f7" stroke="#7c808a" stroke-width="0.8"/><path d="M0.6 0.8l2.65 2 2.65-2" stroke="#7c808a" stroke-width="0.65" fill="none"/></svg>
<div class="t " style="left:473.20px;top:181px;font-size:6.90px;line-height:6.90px;color:#2e3240;transform:scaleX(0.924);">ray1980@yahoo.com</div>
<div class="cb" style="left:5.4px;top:201.25px"></div>
<div class="t " style="left:33.10px;top:205px;font-size:6.90px;line-height:6.90px;color:#2e3240;transform:scaleX(0.960);">Peter&nbsp;Long</div>
<div class="stars" style="left:293.9px;top:202.75px"><svg class="star" style="left:0.00px" viewBox="0 0 24 24"><path d="M12.00 1.20 L15.47 8.23 L23.22 9.35 L17.61 14.82 L18.94 22.55 L12.00 18.90 L5.06 22.55 L6.39 14.82 L0.78 9.35 L8.53 8.23Z" fill="#f3ae3c" stroke="#f3ae3c" stroke-width="1.2" stroke-linejoin="round"/></svg><svg class="star" style="left:7.65px" viewBox="0 0 24 24"><path d="M12.00 1.20 L15.47 8.23 L23.22 9.35 L17.61 14.82 L18.94 22.55 L12.00 18.90 L5.06 22.55 L6.39 14.82 L0.78 9.35 L8.53 8.23Z" fill="#f3ae3c" stroke="#f3ae3c" stroke-width="1.2" stroke-linejoin="round"/></svg><svg class="star" style="left:15.30px" viewBox="0 0 24 24"><path d="M12.00 1.20 L15.47 8.23 L23.22 9.35 L17.61 14.82 L18.94 22.55 L12.00 18.90 L5.06 22.55 L6.39 14.82 L0.78 9.35 L8.53 8.23Z" fill="#f3ae3c" stroke="#f3ae3c" stroke-width="1.2" stroke-linejoin="round"/></svg></div>
<div class="t " style="left:360.90px;top:204px;font-size:6.60px;line-height:6.60px;color:#6a6e78;transform:scaleX(0.709);">$</div>
<div class="t " style="left:367.60px;top:205px;font-size:5.90px;line-height:5.90px;color:#2e3240;transform:scaleX(0.979);">0</div>
<div class="t " style="left:414.70px;top:204px;font-size:6.60px;line-height:6.60px;color:#6a6e78;transform:scaleX(0.709);">$</div>
<div class="t " style="left:420.70px;top:205px;font-size:5.90px;line-height:5.90px;color:#2e3240;transform:scaleX(0.979);">750</div>
<svg class="mail" style="left:464px;top:205px" width="6.5" height="4.8" viewBox="0 0 6.5 4.8"><rect x="0.4" y="0.4" width="5.7" height="4.0" fill="#f4f5f7" stroke="#7c808a" stroke-width="0.8"/><path d="M0.6 0.8l2.65 2 2.65-2" stroke="#7c808a" stroke-width="0.65" fill="none"/></svg>
<div class="t " style="left:473.20px;top:204px;font-size:6.90px;line-height:6.90px;color:#2e3240;transform:scaleX(0.924);">peter@gmail.com</div>
<div class="cb" style="left:5.4px;top:223.55px"></div>
<div class="t " style="left:33.10px;top:227px;font-size:6.90px;line-height:6.90px;color:#2e3240;transform:scaleX(0.909);">James&nbsp;Jenkins</div>
<div class="stars" style="left:293.9px;top:225.05px"><svg class="star" style="left:0.00px" viewBox="0 0 24 24"><path d="M12.00 1.20 L15.47 8.23 L23.22 9.35 L17.61 14.82 L18.94 22.55 L12.00 18.90 L5.06 22.55 L6.39 14.82 L0.78 9.35 L8.53 8.23Z" fill="#f3ae3c" stroke="#f3ae3c" stroke-width="1.2" stroke-linejoin="round"/></svg><svg class="star" style="left:7.65px" viewBox="0 0 24 24"><path d="M12.00 1.20 L15.47 8.23 L23.22 9.35 L17.61 14.82 L18.94 22.55 L12.00 18.90 L5.06 22.55 L6.39 14.82 L0.78 9.35 L8.53 8.23Z" fill="#f3ae3c" stroke="#f3ae3c" stroke-width="1.2" stroke-linejoin="round"/></svg><svg class="star" style="left:15.30px" viewBox="0 0 24 24"><path d="M12.00 1.20 L15.47 8.23 L23.22 9.35 L17.61 14.82 L18.94 22.55 L12.00 18.90 L5.06 22.55 L6.39 14.82 L0.78 9.35 L8.53 8.23Z" fill="#f3ae3c" stroke="#f3ae3c" stroke-width="1.2" stroke-linejoin="round"/></svg><svg class="star" style="left:22.95px" viewBox="0 0 24 24"><path d="M12.00 1.20 L15.47 8.23 L23.22 9.35 L17.61 14.82 L18.94 22.55 L12.00 18.90 L5.06 22.55 L6.39 14.82 L0.78 9.35 L8.53 8.23Z" fill="#f3ae3c" stroke="#f3ae3c" stroke-width="1.2" stroke-linejoin="round"/></svg><svg class="star" style="left:30.60px" viewBox="0 0 24 24"><path d="M12.00 1.20 L15.47 8.23 L23.22 9.35 L17.61 14.82 L18.94 22.55 L12.00 18.90 L5.06 22.55 L6.39 14.82 L0.78 9.35 L8.53 8.23Z" fill="#f3ae3c" stroke="#f3ae3c" stroke-width="1.2" stroke-linejoin="round"/></svg></div>
<div class="t " style="left:360.90px;top:226px;font-size:6.60px;line-height:6.60px;color:#6a6e78;transform:scaleX(0.709);">$</div>
<div class="t " style="left:367.60px;top:227px;font-size:5.90px;line-height:5.90px;color:#2e3240;transform:scaleX(0.979);">0</div>
<div class="t " style="left:414.70px;top:226px;font-size:6.60px;line-height:6.60px;color:#6a6e78;transform:scaleX(0.709);">$</div>
<div class="t " style="left:420.70px;top:227px;font-size:5.90px;line-height:5.90px;color:#2e3240;transform:scaleX(0.979);">6,500</div>
<svg class="mail" style="left:464px;top:227px" width="6.5" height="4.8" viewBox="0 0 6.5 4.8"><rect x="0.4" y="0.4" width="5.7" height="4.0" fill="#f4f5f7" stroke="#7c808a" stroke-width="0.8"/><path d="M0.6 0.8l2.65 2 2.65-2" stroke="#7c808a" stroke-width="0.65" fill="none"/></svg>
<div class="t " style="left:473.36px;top:226px;font-size:6.90px;line-height:6.90px;color:#2e3240;transform:scaleX(0.924);">james@mail.com</div>
<div class="t " style="left:28.60px;top:248px;font-size:6.90px;line-height:6.90px;color:#7a5cd0;transform:scaleX(0.894);">+&nbsp;New&nbsp;task</div>
<div class="t " style="left:70.30px;top:248px;font-size:6.90px;line-height:6.90px;color:#7a5cd0;transform:scaleX(0.878);">+&nbsp;Folder</div>
</div>
</body></html>
